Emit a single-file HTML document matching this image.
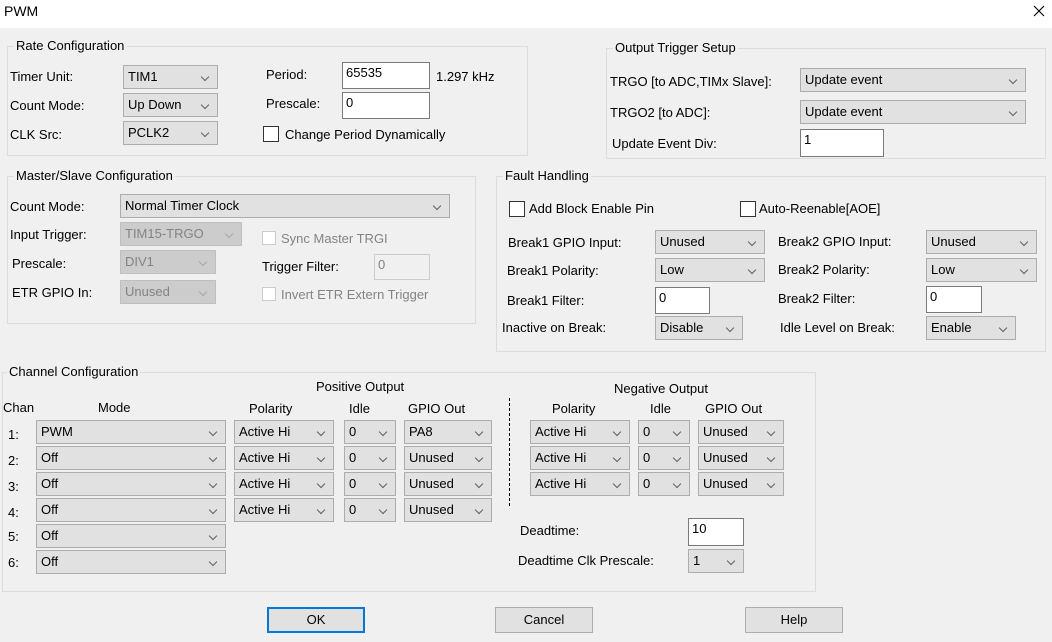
<!DOCTYPE html>
<html><head><meta charset="utf-8"><style>
*{box-sizing:border-box;margin:0;padding:0}
body{width:1052px;height:642px;background:#f0f0f0;font-family:"Liberation Sans",Arial,sans-serif;font-size:13px;color:#000;position:relative;overflow:hidden}
.a{position:absolute;white-space:nowrap}
.tb{position:absolute;left:0;top:0;width:1052px;height:28px;background:#fff}
.g{position:absolute;border:1px solid #dcdcdc}
.gt{position:absolute;background:#f0f0f0;padding:0 2px;top:-9px;left:6px;line-height:16px}
.c{position:absolute;height:24px;background:#e1e1e1;border:1px solid #adadad;line-height:22px;padding-left:4px}
.c::after{content:"";position:absolute;right:9px;top:8px;width:5px;height:5px;border-right:1px solid #606060;border-bottom:1px solid #606060;transform:rotate(45deg)}
.d{background:#cccccc;border-color:#bfbfbf;color:#838383}
.d::after{border-color:#a8a8a8}
.i{position:absolute;background:#fff;border:1px solid #7a7a7a;line-height:20px;padding-left:3px}
.id{background:#f0f0f0;border-color:#cccccc;color:#838383}
.k{position:absolute;width:14px;height:14px;background:#fff;border:1px solid #333}
.kd{border-color:#cccccc}
.dis{color:#838383}
.b{position:absolute;height:26px;background:#e1e1e1;border:1px solid #adadad;text-align:center;line-height:24px}
</style></head><body>
<div class="tb"></div>
<div class="a" style="left:4px;top:3px;font-size:14px">PWM</div>
<svg class="a" style="left:1033px;top:5px" width="12" height="12"><path d="M1 1L11 11M11 1L1 11" stroke="#000" stroke-width="1.1"/></svg>

<!-- Rate Configuration -->
<div class="g" style="left:7px;top:46px;width:521px;height:110px"><div class="gt">Rate Configuration</div></div>
<div class="a" style="left:10px;top:69px">Timer Unit:</div>
<div class="a" style="left:10px;top:98px">Count Mode:</div>
<div class="a" style="left:10px;top:127px">CLK Src:</div>
<div class="c" style="left:123px;top:65px;width:95px">TIM1</div>
<div class="c" style="left:123px;top:93px;width:95px">Up Down</div>
<div class="c" style="left:123px;top:121px;width:95px">PCLK2</div>
<div class="a" style="left:266px;top:67px">Period:</div>
<div class="i" style="left:342px;top:62px;width:88px;height:27px">65535</div>
<div class="a" style="left:436px;top:69px">1.297 kHz</div>
<div class="a" style="left:266px;top:96px">Prescale:</div>
<div class="i" style="left:342px;top:92px;width:88px;height:27px">0</div>
<div class="k" style="left:263px;top:126px;width:16px;height:16px"></div>
<div class="a" style="left:285px;top:127px">Change Period Dynamically</div>

<!-- Output Trigger -->
<div class="g" style="left:606px;top:48px;width:440px;height:111px"><div class="gt">Output Trigger Setup</div></div>
<div class="a" style="left:610px;top:74px">TRGO [to ADC,TIMx Slave]:</div>
<div class="a" style="left:610px;top:105px">TRGO2 [to ADC]:</div>
<div class="a" style="left:612px;top:136px">Update Event Div:</div>
<div class="c" style="left:800px;top:68px;width:226px">Update event</div>
<div class="c" style="left:800px;top:100px;width:226px">Update event</div>
<div class="i" style="left:800px;top:129px;width:84px;height:28px">1</div>

<!-- Master/Slave -->
<div class="g" style="left:7px;top:176px;width:469px;height:148px"><div class="gt">Master/Slave Configuration</div></div>
<div class="a" style="left:10px;top:199px">Count Mode:</div>
<div class="a" style="left:10px;top:227px">Input Trigger:</div>
<div class="a" style="left:12px;top:256px">Prescale:</div>
<div class="a" style="left:12px;top:285px">ETR GPIO In:</div>
<div class="c" style="left:120px;top:194px;width:330px">Normal Timer Clock</div>
<div class="c d" style="left:120px;top:222px;width:122px">TIM15-TRGO</div>
<div class="c d" style="left:120px;top:250px;width:96px">DIV1</div>
<div class="c d" style="left:120px;top:280px;width:96px">Unused</div>
<div class="k kd" style="left:262px;top:231px"></div>
<div class="a dis" style="left:281px;top:231px">Sync Master TRGI</div>
<div class="a" style="left:262px;top:259px">Trigger Filter:</div>
<div class="i id" style="left:374px;top:254px;width:56px;height:26px">0</div>
<div class="k kd" style="left:262px;top:287px"></div>
<div class="a dis" style="left:281px;top:287px">Invert ETR Extern Trigger</div>

<!-- Fault -->
<div class="g" style="left:496px;top:176px;width:550px;height:176px"><div class="gt">Fault Handling</div></div>
<div class="k" style="left:509px;top:201px;width:16px;height:16px"></div>
<div class="a" style="left:529px;top:201px">Add Block Enable Pin</div>
<div class="k" style="left:740px;top:201px;width:16px;height:16px"></div>
<div class="a" style="left:759px;top:201px">Auto-Reenable[AOE]</div>
<div class="a" style="left:508px;top:235px">Break1 GPIO Input:</div>
<div class="a" style="left:507px;top:263px">Break1 Polarity:</div>
<div class="a" style="left:507px;top:293px">Break1 Filter:</div>
<div class="a" style="left:502px;top:320px">Inactive on Break:</div>
<div class="c" style="left:655px;top:230px;width:110px">Unused</div>
<div class="c" style="left:655px;top:258px;width:110px">Low</div>
<div class="i" style="left:655px;top:287px;width:55px;height:27px">0</div>
<div class="c" style="left:655px;top:316px;width:88px">Disable</div>
<div class="a" style="left:778px;top:234px">Break2 GPIO Input:</div>
<div class="a" style="left:778px;top:262px">Break2 Polarity:</div>
<div class="a" style="left:778px;top:291px">Break2 Filter:</div>
<div class="a" style="left:780px;top:320px">Idle Level on Break:</div>
<div class="c" style="left:926px;top:230px;width:111px">Unused</div>
<div class="c" style="left:926px;top:258px;width:111px">Low</div>
<div class="i" style="left:926px;top:286px;width:56px;height:27px">0</div>
<div class="c" style="left:926px;top:316px;width:90px">Enable</div>

<!-- Channel -->
<div class="g" style="left:2px;top:372px;width:814px;height:220px"><div class="gt" style="left:4px">Channel Configuration</div></div>
<div class="a" style="left:316px;top:379px">Positive Output</div>
<div class="a" style="left:3px;top:400px">Chan</div>
<div class="a" style="left:98px;top:400px">Mode</div>
<div class="a" style="left:249px;top:401px">Polarity</div>
<div class="a" style="left:349px;top:401px">Idle</div>
<div class="a" style="left:408px;top:401px">GPIO Out</div>
<div class="a" style="left:8px;top:427px">1:</div>
<div class="a" style="left:8px;top:453px">2:</div>
<div class="a" style="left:8px;top:479px">3:</div>
<div class="a" style="left:8px;top:505px">4:</div>
<div class="a" style="left:8px;top:529px">5:</div>
<div class="a" style="left:8px;top:555px">6:</div>
<div class="c" style="left:36px;top:420px;width:190px">PWM</div>
<div class="c" style="left:36px;top:446px;width:190px">Off</div>
<div class="c" style="left:36px;top:472px;width:190px">Off</div>
<div class="c" style="left:36px;top:498px;width:190px">Off</div>
<div class="c" style="left:36px;top:524px;width:190px">Off</div>
<div class="c" style="left:36px;top:550px;width:190px">Off</div>
<div class="c" style="left:234px;top:420px;width:100px">Active Hi</div>
<div class="c" style="left:234px;top:446px;width:100px">Active Hi</div>
<div class="c" style="left:234px;top:472px;width:100px">Active Hi</div>
<div class="c" style="left:234px;top:498px;width:100px">Active Hi</div>
<div class="c" style="left:344px;top:420px;width:52px">0</div>
<div class="c" style="left:344px;top:446px;width:52px">0</div>
<div class="c" style="left:344px;top:472px;width:52px">0</div>
<div class="c" style="left:344px;top:498px;width:52px">0</div>
<div class="c" style="left:404px;top:420px;width:88px">PA8</div>
<div class="c" style="left:404px;top:446px;width:88px">Unused</div>
<div class="c" style="left:404px;top:472px;width:88px">Unused</div>
<div class="c" style="left:404px;top:498px;width:88px">Unused</div>
<div class="a" style="left:509px;top:398px;width:1px;height:108px;border-left:1px dashed #000"></div>
<div class="a" style="left:614px;top:381px">Negative Output</div>
<div class="a" style="left:552px;top:401px">Polarity</div>
<div class="a" style="left:650px;top:401px">Idle</div>
<div class="a" style="left:705px;top:401px">GPIO Out</div>
<div class="c" style="left:530px;top:420px;width:100px">Active Hi</div>
<div class="c" style="left:530px;top:446px;width:100px">Active Hi</div>
<div class="c" style="left:530px;top:472px;width:100px">Active Hi</div>
<div class="c" style="left:638px;top:420px;width:52px">0</div>
<div class="c" style="left:638px;top:446px;width:52px">0</div>
<div class="c" style="left:638px;top:472px;width:52px">0</div>
<div class="c" style="left:698px;top:420px;width:86px">Unused</div>
<div class="c" style="left:698px;top:446px;width:86px">Unused</div>
<div class="c" style="left:698px;top:472px;width:86px">Unused</div>
<div class="a" style="left:520px;top:523px">Deadtime:</div>
<div class="i" style="left:688px;top:518px;width:56px;height:28px">10</div>
<div class="a" style="left:518px;top:553px">Deadtime Clk Prescale:</div>
<div class="c" style="left:688px;top:549px;width:56px">1</div>

<!-- Buttons -->
<div class="b" style="left:267px;top:607px;width:98px;border:2px solid #0078d7;line-height:22px">OK</div>
<div class="b" style="left:495px;top:607px;width:98px">Cancel</div>
<div class="b" style="left:745px;top:607px;width:98px">Help</div>
</body></html>
